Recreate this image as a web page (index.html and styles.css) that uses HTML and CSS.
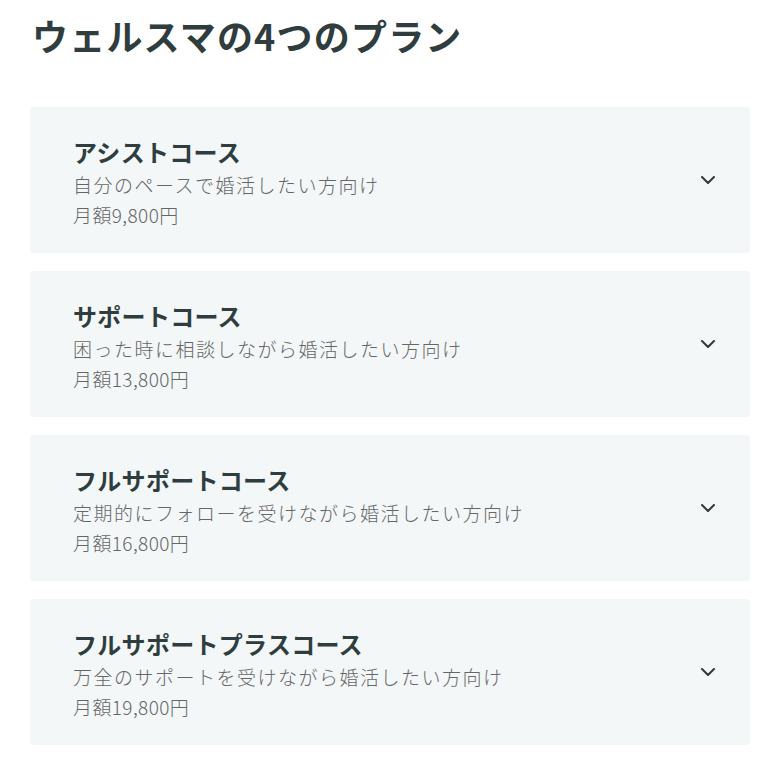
FILE: index.html
```html
<!DOCTYPE html>
<html lang="ja">
<head>
<meta charset="utf-8">
<title>ウェルスマの4つのプラン</title>
<link rel="stylesheet" href="styles.css">
</head>
<body>
<main class="plans">
  <h1 class="plans-title">ウェルスマの4つのプラン</h1>
  <ul class="plan-list">
    <li class="plan-card">
      <div class="plan-text">
        <h2 class="plan-name">アシストコース</h2>
        <p class="plan-desc">自分のペースで婚活したい方向け</p>
        <p class="plan-price">月額9,800円</p>
      </div>
      <svg class="chevron" viewBox="0 0 14 8" width="14" height="8"><path d="M1 1l6 6 6-6" fill="none" stroke="currentColor" stroke-width="2" stroke-linecap="round" stroke-linejoin="round"/></svg>
    </li>
    <li class="plan-card">
      <div class="plan-text">
        <h2 class="plan-name">サポートコース</h2>
        <p class="plan-desc">困った時に相談しながら婚活したい方向け</p>
        <p class="plan-price">月額13,800円</p>
      </div>
      <svg class="chevron" viewBox="0 0 14 8" width="14" height="8"><path d="M1 1l6 6 6-6" fill="none" stroke="currentColor" stroke-width="2" stroke-linecap="round" stroke-linejoin="round"/></svg>
    </li>
    <li class="plan-card">
      <div class="plan-text">
        <h2 class="plan-name">フルサポートコース</h2>
        <p class="plan-desc">定期的にフォローを受けながら婚活したい方向け</p>
        <p class="plan-price">月額16,800円</p>
      </div>
      <svg class="chevron" viewBox="0 0 14 8" width="14" height="8"><path d="M1 1l6 6 6-6" fill="none" stroke="currentColor" stroke-width="2" stroke-linecap="round" stroke-linejoin="round"/></svg>
    </li>
    <li class="plan-card">
      <div class="plan-text">
        <h2 class="plan-name">フルサポートプラスコース</h2>
        <p class="plan-desc">万全のサポートを受けながら婚活したい方向け</p>
        <p class="plan-price">月額19,800円</p>
      </div>
      <svg class="chevron" viewBox="0 0 14 8" width="14" height="8"><path d="M1 1l6 6 6-6" fill="none" stroke="currentColor" stroke-width="2" stroke-linecap="round" stroke-linejoin="round"/></svg>
    </li>
  </ul>
</main>
</body>
</html>
```

FILE: styles.css
```css
* { box-sizing: border-box; }
html, body { margin: 0; padding: 0; background: #ffffff; }
body {
  font-family: "Noto Sans CJK JP", "Noto Sans", sans-serif;
  color: #2f3d3e;
}
.plans {
  width: 720px;
  margin-left: 30px;
}
.plans-title {
  margin: 0;
  padding: 8px 0 0 2px;
  font-size: 36px;
  line-height: 54px;
  font-weight: 700;
  letter-spacing: 1.2px;
  color: #2f3d3e;
}
.plan-list {
  list-style: none;
  margin: 45px 0 0;
  padding: 0;
  display: flex;
  flex-direction: column;
  gap: 18px;
}
.plan-card {
  display: flex;
  align-items: center;
  justify-content: space-between;
  background: #f3f7f8;
  border-radius: 4px;
  height: 146px;
  padding: 4px 34px 0 43px;
}
.plan-name {
  margin: 0;
  font-size: 24px;
  line-height: 36px;
  font-weight: 700;
  letter-spacing: 0.3px;
  color: #2f3d3e;
}
.plan-desc, .plan-price {
  margin: 0;
  font-size: 19px;
  line-height: 30px;
  font-weight: 300;
  color: #666666;
  letter-spacing: 1.5px;
}
.plan-price { letter-spacing: 0.4px; }
.chevron {
  flex: none;
  margin-top: -4px;
  margin-right: 1px;
  color: #333a3a;
}
```
